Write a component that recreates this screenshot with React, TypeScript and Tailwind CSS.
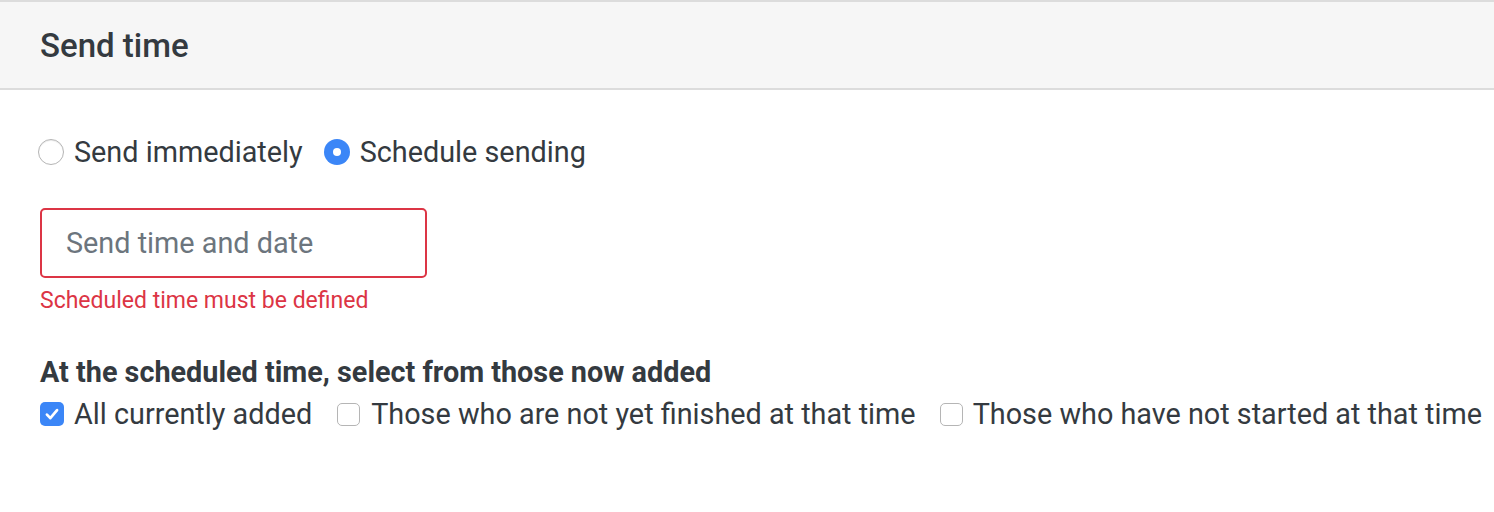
import React, { useState } from "react";

function Radio({ checked }: { checked: boolean }) {
  return checked ? (
    <span className="grid h-[26px] w-[26px] shrink-0 place-items-center rounded-full bg-[#3b86f7]">
      <span className="h-[8px] w-[8px] rounded-full bg-white" />
    </span>
  ) : (
    <span className="h-[26px] w-[26px] shrink-0 rounded-full border border-[#b5b5b5] bg-white shadow-[inset_0_1px_1px_rgba(0,0,0,0.08)]" />
  );
}

function Check({ checked }: { checked: boolean }) {
  return checked ? (
    <span className="grid h-[24px] w-[24px] shrink-0 place-items-center rounded-[5px] bg-[#3b86f7]">
      <svg viewBox="0 0 16 16" className="h-[18px] w-[18px]" fill="none">
        <path d="M3.5 8.5l3 3.2 6-7.2" stroke="white" strokeWidth="2.4" strokeLinecap="round" strokeLinejoin="round" />
      </svg>
    </span>
  ) : (
    <span className="h-[23px] w-[23px] shrink-0 rounded-[5px] border border-[#b5b5b5] bg-white" />
  );
}

export default function App() {
  const [mode, setMode] = useState("schedule");
  const [picks, setPicks] = useState({ all: true, unfinished: false, unstarted: false });

  return (
    <div className="min-h-[512px] overflow-hidden bg-white font-['Roboto','Liberation_Sans',sans-serif] text-[#343a40]">
      <div className="flex h-[90px] items-center border-t-2 border-b-2 border-[#dcdcdc] bg-[#f6f6f6] px-[40px]">
        <h2 className="text-[33px] font-medium leading-none">Send time</h2>
      </div>

      <div className="pl-[38px] pt-[45px]">
        <div className="flex items-center whitespace-nowrap text-[28.8px] leading-[34px]">
          <label className="flex cursor-pointer items-center gap-[10px]" onClick={() => setMode("now")}>
            <Radio checked={mode === "now"} />
            <span>Send immediately</span>
          </label>
          <label className="ml-[21px] flex cursor-pointer items-center gap-[10px]" onClick={() => setMode("schedule")}>
            <Radio checked={mode === "schedule"} />
            <span>Schedule sending</span>
          </label>
        </div>

        <div className="mt-[39px] pl-[2px]">
          <input
            placeholder="Send time and date"
            className="block h-[70px] w-[387px] rounded-[5px] border-2 border-[#dc3545] bg-white px-[24px] text-[28.8px] text-[#343a40] outline-none placeholder:text-[#6c757d]"
          />
          <p className="mt-[9px] text-[23px] leading-[28px] text-[#dc3545]">Scheduled time must be defined</p>
        </div>

        <div className="mt-[40px] pl-[2px]">
          <p className="whitespace-nowrap text-[28.8px] font-bold leading-[34px]">At the scheduled time, select from those now added</p>
          <div className="mt-[8px] flex items-center whitespace-nowrap text-[28.8px] leading-[34px]">
            <label className="flex shrink-0 cursor-pointer items-center gap-[10px]" onClick={() => setPicks((p) => ({ ...p, all: !p.all }))}>
              <Check checked={picks.all} />
              <span>All currently added</span>
            </label>
            <label className="ml-[25px] flex shrink-0 cursor-pointer items-center gap-[11px]" onClick={() => setPicks((p) => ({ ...p, unfinished: !p.unfinished }))}>
              <Check checked={picks.unfinished} />
              <span>Those who are not yet finished at that time</span>
            </label>
            <label className="ml-[24px] flex shrink-0 cursor-pointer items-center gap-[10px]" onClick={() => setPicks((p) => ({ ...p, unstarted: !p.unstarted }))}>
              <Check checked={picks.unstarted} />
              <span>Those who have not started at that time</span>
            </label>
          </div>
        </div>
      </div>
    </div>
  );
}
